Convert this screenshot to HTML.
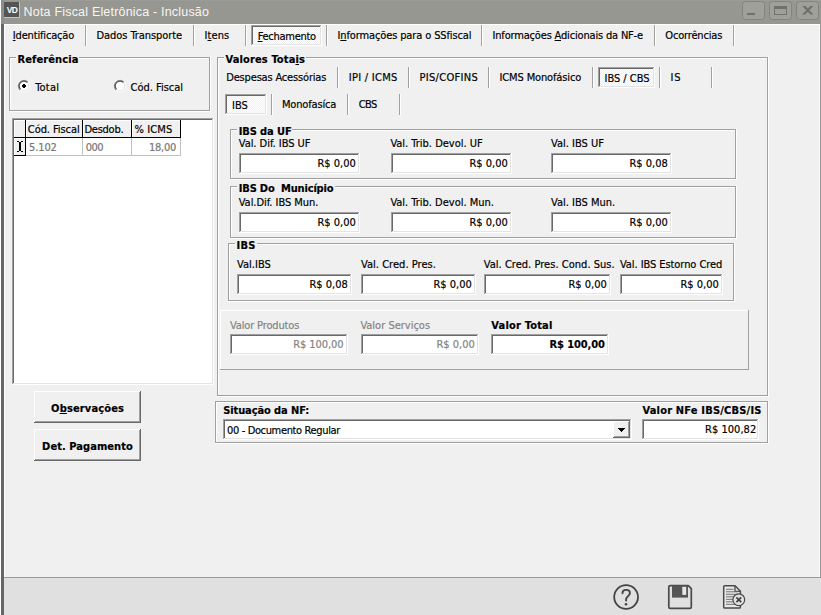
<!DOCTYPE html>
<html lang="pt-BR"><head><meta charset="utf-8"><title>Nota Fiscal Eletrônica - Inclusão</title>
<style>
html,body{margin:0;padding:0}
body{width:821px;height:615px;overflow:hidden;background:#f0f0f0;position:relative;font-family:"DejaVu Sans Condensed","DejaVu Sans","Liberation Sans",sans-serif;font-size:11px;font-stretch:condensed;line-height:14px;color:#000}
#w{position:absolute;left:0;top:0;width:821px;height:615px;overflow:hidden;background:#f0f0f0}
#w i{position:absolute;display:block}
#w span{position:absolute;white-space:pre;height:14px;-webkit-text-stroke:0.18px currentColor}
#w u{text-decoration:underline;text-underline-offset:1px;text-decoration-thickness:1px}
#w svg{position:absolute;overflow:visible}
</style></head><body><div id="w">
<i style="left:0px;top:0px;width:821px;height:24px;background:#969790;"></i>
<i style="left:0px;top:0px;width:821px;height:1px;background:#9b9b98;"></i>
<i style="left:0px;top:0px;width:1px;height:615px;background:#ffffff;"></i>
<i style="left:1px;top:0px;width:3px;height:24px;background:#8e8e8c;"></i>
<i style="left:1px;top:24px;width:3px;height:591px;background:#666666;"></i>
<i style="left:4px;top:24px;width:816px;height:1px;background:#ffffff;"></i>
<i style="left:4px;top:24px;width:1px;height:553px;background:#ffffff;"></i>
<i style="left:819px;top:25px;width:1px;height:552px;background:#fafafa;"></i>
<i style="left:820px;top:24px;width:1px;height:554px;background:#999999;"></i>
<i style="left:4px;top:577px;width:817px;height:1px;background:#999999;"></i>
<i style="left:4px;top:578px;width:817px;height:37px;background:#e0e0e0;"></i>
<i style="left:4px;top:2px;width:15px;height:15px;background:#555555;"></i>
<i style="left:19px;top:2px;width:1px;height:16px;background:#c4c4c0;"></i>
<i style="left:4px;top:17px;width:16px;height:1px;background:#c4c4c0;"></i>
<i style="left:85px;top:25px;width:1px;height:21px;background:#a0a0a0;"></i>
<i style="left:86px;top:25px;width:1px;height:21px;background:#ffffff;"></i>
<i style="left:193px;top:25px;width:1px;height:21px;background:#a0a0a0;"></i>
<i style="left:194px;top:25px;width:1px;height:21px;background:#ffffff;"></i>
<i style="left:245px;top:25px;width:1px;height:21px;background:#a0a0a0;"></i>
<i style="left:246px;top:25px;width:1px;height:21px;background:#ffffff;"></i>
<i style="left:326px;top:25px;width:1px;height:21px;background:#a0a0a0;"></i>
<i style="left:327px;top:25px;width:1px;height:21px;background:#ffffff;"></i>
<i style="left:481px;top:25px;width:1px;height:21px;background:#a0a0a0;"></i>
<i style="left:482px;top:25px;width:1px;height:21px;background:#ffffff;"></i>
<i style="left:654px;top:25px;width:1px;height:21px;background:#a0a0a0;"></i>
<i style="left:655px;top:25px;width:1px;height:21px;background:#ffffff;"></i>
<i style="left:733px;top:25px;width:1px;height:21px;background:#a0a0a0;"></i>
<i style="left:734px;top:25px;width:1px;height:21px;background:#ffffff;"></i>
<i style="left:251px;top:25px;width:71px;height:21px;background:#f8f8f8;background:repeating-conic-gradient(#ffffff 0% 25%,#f0f0f0 0% 50%) 0 0/2px 2px;"></i>
<i style="left:251px;top:25px;width:71px;height:1px;background:#a0a0a0;"></i>
<i style="left:251px;top:25px;width:1px;height:21px;background:#a0a0a0;"></i>
<i style="left:252px;top:26px;width:69px;height:1px;background:#696969;"></i>
<i style="left:252px;top:26px;width:1px;height:19px;background:#696969;"></i>
<i style="left:252px;top:44px;width:69px;height:1px;background:#e3e3e3;"></i>
<i style="left:320px;top:26px;width:1px;height:19px;background:#e3e3e3;"></i>
<i style="left:251px;top:45px;width:71px;height:1px;background:#ffffff;"></i>
<i style="left:321px;top:25px;width:1px;height:21px;background:#ffffff;"></i>
<i style="left:9px;top:57px;width:7px;height:1px;background:#a0a0a0;"></i>
<i style="left:79px;top:57px;width:131px;height:1px;background:#a0a0a0;"></i>
<i style="left:10px;top:58px;width:6px;height:1px;background:#ffffff;"></i>
<i style="left:79px;top:58px;width:130px;height:1px;background:#ffffff;"></i>
<i style="left:9px;top:57px;width:1px;height:54px;background:#a0a0a0;"></i>
<i style="left:10px;top:58px;width:1px;height:52px;background:#ffffff;"></i>
<i style="left:9px;top:110px;width:201px;height:1px;background:#a0a0a0;"></i>
<i style="left:9px;top:111px;width:202px;height:1px;background:#ffffff;"></i>
<i style="left:209px;top:57px;width:1px;height:54px;background:#a0a0a0;"></i>
<i style="left:210px;top:57px;width:1px;height:55px;background:#ffffff;"></i>
<i style="left:12px;top:118px;width:202px;height:267px;background:#ffffff;"></i>
<i style="left:12px;top:118px;width:202px;height:1px;background:#a0a0a0;"></i>
<i style="left:12px;top:118px;width:1px;height:267px;background:#a0a0a0;"></i>
<i style="left:13px;top:119px;width:200px;height:1px;background:#696969;"></i>
<i style="left:13px;top:119px;width:1px;height:265px;background:#696969;"></i>
<i style="left:13px;top:383px;width:200px;height:1px;background:#e3e3e3;"></i>
<i style="left:212px;top:119px;width:1px;height:265px;background:#e3e3e3;"></i>
<i style="left:12px;top:384px;width:202px;height:1px;background:#ffffff;"></i>
<i style="left:213px;top:118px;width:1px;height:267px;background:#ffffff;"></i>
<i style="left:14px;top:120px;width:12px;height:18px;background:#f0f0f0;"></i>
<i style="left:14px;top:120px;width:11px;height:1px;background:#ffffff;"></i>
<i style="left:14px;top:120px;width:1px;height:17px;background:#ffffff;"></i>
<i style="left:25px;top:120px;width:1px;height:18px;background:#000;"></i>
<i style="left:14px;top:137px;width:12px;height:1px;background:#000;"></i>
<i style="left:26px;top:120px;width:57px;height:18px;background:#f0f0f0;"></i>
<i style="left:26px;top:120px;width:56px;height:1px;background:#ffffff;"></i>
<i style="left:26px;top:120px;width:1px;height:17px;background:#ffffff;"></i>
<i style="left:82px;top:120px;width:1px;height:18px;background:#000;"></i>
<i style="left:26px;top:137px;width:57px;height:1px;background:#000;"></i>
<i style="left:83px;top:120px;width:49px;height:18px;background:#f0f0f0;"></i>
<i style="left:83px;top:120px;width:48px;height:1px;background:#ffffff;"></i>
<i style="left:83px;top:120px;width:1px;height:17px;background:#ffffff;"></i>
<i style="left:131px;top:120px;width:1px;height:18px;background:#000;"></i>
<i style="left:83px;top:137px;width:49px;height:1px;background:#000;"></i>
<i style="left:132px;top:120px;width:49px;height:18px;background:#f0f0f0;"></i>
<i style="left:132px;top:120px;width:48px;height:1px;background:#ffffff;"></i>
<i style="left:132px;top:120px;width:1px;height:17px;background:#ffffff;"></i>
<i style="left:180px;top:120px;width:1px;height:18px;background:#000;"></i>
<i style="left:132px;top:137px;width:49px;height:1px;background:#000;"></i>
<i style="left:14px;top:138px;width:12px;height:18px;background:#f0f0f0;"></i>
<i style="left:25px;top:138px;width:1px;height:18px;background:#000;"></i>
<i style="left:14px;top:155px;width:12px;height:1px;background:#000;"></i>
<i style="left:14px;top:138px;width:11px;height:1px;background:#ffffff;"></i>
<i style="left:14px;top:138px;width:1px;height:17px;background:#ffffff;"></i>
<i style="left:82px;top:138px;width:1px;height:18px;background:#c0c0c0;"></i>
<i style="left:131px;top:138px;width:1px;height:18px;background:#c0c0c0;"></i>
<i style="left:180px;top:138px;width:1px;height:18px;background:#c0c0c0;"></i>
<i style="left:26px;top:155px;width:155px;height:1px;background:#c0c0c0;"></i>
<i style="left:34px;top:391px;width:107px;height:32px;background:#f0f0f0;"></i>
<i style="left:34px;top:391px;width:106px;height:1px;background:#ffffff;"></i>
<i style="left:34px;top:391px;width:1px;height:31px;background:#ffffff;"></i>
<i style="left:35px;top:421px;width:105px;height:1px;background:#a0a0a0;"></i>
<i style="left:139px;top:392px;width:1px;height:30px;background:#a0a0a0;"></i>
<i style="left:34px;top:422px;width:107px;height:1px;background:#696969;"></i>
<i style="left:140px;top:391px;width:1px;height:32px;background:#696969;"></i>
<i style="left:34px;top:429px;width:107px;height:32px;background:#f0f0f0;"></i>
<i style="left:34px;top:429px;width:106px;height:1px;background:#ffffff;"></i>
<i style="left:34px;top:429px;width:1px;height:31px;background:#ffffff;"></i>
<i style="left:35px;top:459px;width:105px;height:1px;background:#a0a0a0;"></i>
<i style="left:139px;top:430px;width:1px;height:30px;background:#a0a0a0;"></i>
<i style="left:34px;top:460px;width:107px;height:1px;background:#696969;"></i>
<i style="left:140px;top:429px;width:1px;height:32px;background:#696969;"></i>
<i style="left:217px;top:57px;width:7px;height:1px;background:#a0a0a0;"></i>
<i style="left:306px;top:57px;width:462px;height:1px;background:#a0a0a0;"></i>
<i style="left:218px;top:58px;width:6px;height:1px;background:#ffffff;"></i>
<i style="left:306px;top:58px;width:461px;height:1px;background:#ffffff;"></i>
<i style="left:217px;top:57px;width:1px;height:339px;background:#a0a0a0;"></i>
<i style="left:218px;top:58px;width:1px;height:337px;background:#ffffff;"></i>
<i style="left:217px;top:395px;width:551px;height:1px;background:#a0a0a0;"></i>
<i style="left:217px;top:396px;width:552px;height:1px;background:#ffffff;"></i>
<i style="left:767px;top:57px;width:1px;height:339px;background:#a0a0a0;"></i>
<i style="left:768px;top:57px;width:1px;height:340px;background:#ffffff;"></i>
<i style="left:337px;top:67px;width:1px;height:21px;background:#a0a0a0;"></i>
<i style="left:338px;top:67px;width:1px;height:21px;background:#ffffff;"></i>
<i style="left:408px;top:67px;width:1px;height:21px;background:#a0a0a0;"></i>
<i style="left:409px;top:67px;width:1px;height:21px;background:#ffffff;"></i>
<i style="left:488px;top:67px;width:1px;height:21px;background:#a0a0a0;"></i>
<i style="left:489px;top:67px;width:1px;height:21px;background:#ffffff;"></i>
<i style="left:592px;top:67px;width:1px;height:21px;background:#a0a0a0;"></i>
<i style="left:593px;top:67px;width:1px;height:21px;background:#ffffff;"></i>
<i style="left:659px;top:67px;width:1px;height:21px;background:#a0a0a0;"></i>
<i style="left:660px;top:67px;width:1px;height:21px;background:#ffffff;"></i>
<i style="left:711px;top:67px;width:1px;height:21px;background:#a0a0a0;"></i>
<i style="left:712px;top:67px;width:1px;height:21px;background:#ffffff;"></i>
<i style="left:598px;top:67px;width:57px;height:21px;background:#f8f8f8;background:repeating-conic-gradient(#ffffff 0% 25%,#f0f0f0 0% 50%) 0 0/2px 2px;"></i>
<i style="left:598px;top:67px;width:57px;height:1px;background:#a0a0a0;"></i>
<i style="left:598px;top:67px;width:1px;height:21px;background:#a0a0a0;"></i>
<i style="left:599px;top:68px;width:55px;height:1px;background:#696969;"></i>
<i style="left:599px;top:68px;width:1px;height:19px;background:#696969;"></i>
<i style="left:599px;top:86px;width:55px;height:1px;background:#e3e3e3;"></i>
<i style="left:653px;top:68px;width:1px;height:19px;background:#e3e3e3;"></i>
<i style="left:598px;top:87px;width:57px;height:1px;background:#ffffff;"></i>
<i style="left:654px;top:67px;width:1px;height:21px;background:#ffffff;"></i>
<i style="left:271px;top:94px;width:1px;height:21px;background:#a0a0a0;"></i>
<i style="left:272px;top:94px;width:1px;height:21px;background:#ffffff;"></i>
<i style="left:347px;top:94px;width:1px;height:21px;background:#a0a0a0;"></i>
<i style="left:348px;top:94px;width:1px;height:21px;background:#ffffff;"></i>
<i style="left:399px;top:94px;width:1px;height:21px;background:#a0a0a0;"></i>
<i style="left:400px;top:94px;width:1px;height:21px;background:#ffffff;"></i>
<i style="left:225px;top:94px;width:42px;height:21px;background:#f8f8f8;background:repeating-conic-gradient(#ffffff 0% 25%,#f0f0f0 0% 50%) 0 0/2px 2px;"></i>
<i style="left:225px;top:94px;width:42px;height:1px;background:#a0a0a0;"></i>
<i style="left:225px;top:94px;width:1px;height:21px;background:#a0a0a0;"></i>
<i style="left:226px;top:95px;width:40px;height:1px;background:#696969;"></i>
<i style="left:226px;top:95px;width:1px;height:19px;background:#696969;"></i>
<i style="left:226px;top:113px;width:40px;height:1px;background:#e3e3e3;"></i>
<i style="left:265px;top:95px;width:1px;height:19px;background:#e3e3e3;"></i>
<i style="left:225px;top:114px;width:42px;height:1px;background:#ffffff;"></i>
<i style="left:266px;top:94px;width:1px;height:21px;background:#ffffff;"></i>
<i style="left:230px;top:129px;width:7px;height:1px;background:#a0a0a0;"></i>
<i style="left:292px;top:129px;width:444px;height:1px;background:#a0a0a0;"></i>
<i style="left:231px;top:130px;width:6px;height:1px;background:#ffffff;"></i>
<i style="left:292px;top:130px;width:443px;height:1px;background:#ffffff;"></i>
<i style="left:230px;top:129px;width:1px;height:50px;background:#a0a0a0;"></i>
<i style="left:231px;top:130px;width:1px;height:48px;background:#ffffff;"></i>
<i style="left:230px;top:178px;width:506px;height:1px;background:#a0a0a0;"></i>
<i style="left:230px;top:179px;width:507px;height:1px;background:#ffffff;"></i>
<i style="left:735px;top:129px;width:1px;height:50px;background:#a0a0a0;"></i>
<i style="left:736px;top:129px;width:1px;height:51px;background:#ffffff;"></i>
<i style="left:239px;top:153px;width:121px;height:21px;background:#ffffff;"></i>
<i style="left:239px;top:153px;width:121px;height:1px;background:#a0a0a0;"></i>
<i style="left:239px;top:153px;width:1px;height:21px;background:#a0a0a0;"></i>
<i style="left:240px;top:154px;width:119px;height:1px;background:#696969;"></i>
<i style="left:240px;top:154px;width:1px;height:19px;background:#696969;"></i>
<i style="left:240px;top:172px;width:119px;height:1px;background:#e3e3e3;"></i>
<i style="left:358px;top:154px;width:1px;height:19px;background:#e3e3e3;"></i>
<i style="left:239px;top:173px;width:121px;height:1px;background:#ffffff;"></i>
<i style="left:359px;top:153px;width:1px;height:21px;background:#ffffff;"></i>
<i style="left:391px;top:153px;width:121px;height:21px;background:#ffffff;"></i>
<i style="left:391px;top:153px;width:121px;height:1px;background:#a0a0a0;"></i>
<i style="left:391px;top:153px;width:1px;height:21px;background:#a0a0a0;"></i>
<i style="left:392px;top:154px;width:119px;height:1px;background:#696969;"></i>
<i style="left:392px;top:154px;width:1px;height:19px;background:#696969;"></i>
<i style="left:392px;top:172px;width:119px;height:1px;background:#e3e3e3;"></i>
<i style="left:510px;top:154px;width:1px;height:19px;background:#e3e3e3;"></i>
<i style="left:391px;top:173px;width:121px;height:1px;background:#ffffff;"></i>
<i style="left:511px;top:153px;width:1px;height:21px;background:#ffffff;"></i>
<i style="left:551px;top:153px;width:121px;height:21px;background:#ffffff;"></i>
<i style="left:551px;top:153px;width:121px;height:1px;background:#a0a0a0;"></i>
<i style="left:551px;top:153px;width:1px;height:21px;background:#a0a0a0;"></i>
<i style="left:552px;top:154px;width:119px;height:1px;background:#696969;"></i>
<i style="left:552px;top:154px;width:1px;height:19px;background:#696969;"></i>
<i style="left:552px;top:172px;width:119px;height:1px;background:#e3e3e3;"></i>
<i style="left:670px;top:154px;width:1px;height:19px;background:#e3e3e3;"></i>
<i style="left:551px;top:173px;width:121px;height:1px;background:#ffffff;"></i>
<i style="left:671px;top:153px;width:1px;height:21px;background:#ffffff;"></i>
<i style="left:230px;top:186px;width:7px;height:1px;background:#a0a0a0;"></i>
<i style="left:335px;top:186px;width:401px;height:1px;background:#a0a0a0;"></i>
<i style="left:231px;top:187px;width:6px;height:1px;background:#ffffff;"></i>
<i style="left:335px;top:187px;width:400px;height:1px;background:#ffffff;"></i>
<i style="left:230px;top:186px;width:1px;height:52px;background:#a0a0a0;"></i>
<i style="left:231px;top:187px;width:1px;height:50px;background:#ffffff;"></i>
<i style="left:230px;top:237px;width:506px;height:1px;background:#a0a0a0;"></i>
<i style="left:230px;top:238px;width:507px;height:1px;background:#ffffff;"></i>
<i style="left:735px;top:186px;width:1px;height:52px;background:#a0a0a0;"></i>
<i style="left:736px;top:186px;width:1px;height:53px;background:#ffffff;"></i>
<i style="left:239px;top:212px;width:121px;height:21px;background:#ffffff;"></i>
<i style="left:239px;top:212px;width:121px;height:1px;background:#a0a0a0;"></i>
<i style="left:239px;top:212px;width:1px;height:21px;background:#a0a0a0;"></i>
<i style="left:240px;top:213px;width:119px;height:1px;background:#696969;"></i>
<i style="left:240px;top:213px;width:1px;height:19px;background:#696969;"></i>
<i style="left:240px;top:231px;width:119px;height:1px;background:#e3e3e3;"></i>
<i style="left:358px;top:213px;width:1px;height:19px;background:#e3e3e3;"></i>
<i style="left:239px;top:232px;width:121px;height:1px;background:#ffffff;"></i>
<i style="left:359px;top:212px;width:1px;height:21px;background:#ffffff;"></i>
<i style="left:391px;top:212px;width:121px;height:21px;background:#ffffff;"></i>
<i style="left:391px;top:212px;width:121px;height:1px;background:#a0a0a0;"></i>
<i style="left:391px;top:212px;width:1px;height:21px;background:#a0a0a0;"></i>
<i style="left:392px;top:213px;width:119px;height:1px;background:#696969;"></i>
<i style="left:392px;top:213px;width:1px;height:19px;background:#696969;"></i>
<i style="left:392px;top:231px;width:119px;height:1px;background:#e3e3e3;"></i>
<i style="left:510px;top:213px;width:1px;height:19px;background:#e3e3e3;"></i>
<i style="left:391px;top:232px;width:121px;height:1px;background:#ffffff;"></i>
<i style="left:511px;top:212px;width:1px;height:21px;background:#ffffff;"></i>
<i style="left:551px;top:212px;width:121px;height:21px;background:#ffffff;"></i>
<i style="left:551px;top:212px;width:121px;height:1px;background:#a0a0a0;"></i>
<i style="left:551px;top:212px;width:1px;height:21px;background:#a0a0a0;"></i>
<i style="left:552px;top:213px;width:119px;height:1px;background:#696969;"></i>
<i style="left:552px;top:213px;width:1px;height:19px;background:#696969;"></i>
<i style="left:552px;top:231px;width:119px;height:1px;background:#e3e3e3;"></i>
<i style="left:670px;top:213px;width:1px;height:19px;background:#e3e3e3;"></i>
<i style="left:551px;top:232px;width:121px;height:1px;background:#ffffff;"></i>
<i style="left:671px;top:212px;width:1px;height:21px;background:#ffffff;"></i>
<i style="left:228px;top:243px;width:7px;height:1px;background:#a0a0a0;"></i>
<i style="left:257px;top:243px;width:477px;height:1px;background:#a0a0a0;"></i>
<i style="left:229px;top:244px;width:6px;height:1px;background:#ffffff;"></i>
<i style="left:257px;top:244px;width:476px;height:1px;background:#ffffff;"></i>
<i style="left:228px;top:243px;width:1px;height:58px;background:#a0a0a0;"></i>
<i style="left:229px;top:244px;width:1px;height:56px;background:#ffffff;"></i>
<i style="left:228px;top:300px;width:506px;height:1px;background:#a0a0a0;"></i>
<i style="left:228px;top:301px;width:507px;height:1px;background:#ffffff;"></i>
<i style="left:733px;top:243px;width:1px;height:58px;background:#a0a0a0;"></i>
<i style="left:734px;top:243px;width:1px;height:59px;background:#ffffff;"></i>
<i style="left:237px;top:274px;width:115px;height:21px;background:#ffffff;"></i>
<i style="left:237px;top:274px;width:115px;height:1px;background:#a0a0a0;"></i>
<i style="left:237px;top:274px;width:1px;height:21px;background:#a0a0a0;"></i>
<i style="left:238px;top:275px;width:113px;height:1px;background:#696969;"></i>
<i style="left:238px;top:275px;width:1px;height:19px;background:#696969;"></i>
<i style="left:238px;top:293px;width:113px;height:1px;background:#e3e3e3;"></i>
<i style="left:350px;top:275px;width:1px;height:19px;background:#e3e3e3;"></i>
<i style="left:237px;top:294px;width:115px;height:1px;background:#ffffff;"></i>
<i style="left:351px;top:274px;width:1px;height:21px;background:#ffffff;"></i>
<i style="left:361px;top:274px;width:115px;height:21px;background:#ffffff;"></i>
<i style="left:361px;top:274px;width:115px;height:1px;background:#a0a0a0;"></i>
<i style="left:361px;top:274px;width:1px;height:21px;background:#a0a0a0;"></i>
<i style="left:362px;top:275px;width:113px;height:1px;background:#696969;"></i>
<i style="left:362px;top:275px;width:1px;height:19px;background:#696969;"></i>
<i style="left:362px;top:293px;width:113px;height:1px;background:#e3e3e3;"></i>
<i style="left:474px;top:275px;width:1px;height:19px;background:#e3e3e3;"></i>
<i style="left:361px;top:294px;width:115px;height:1px;background:#ffffff;"></i>
<i style="left:475px;top:274px;width:1px;height:21px;background:#ffffff;"></i>
<i style="left:484px;top:274px;width:127px;height:21px;background:#ffffff;"></i>
<i style="left:484px;top:274px;width:127px;height:1px;background:#a0a0a0;"></i>
<i style="left:484px;top:274px;width:1px;height:21px;background:#a0a0a0;"></i>
<i style="left:485px;top:275px;width:125px;height:1px;background:#696969;"></i>
<i style="left:485px;top:275px;width:1px;height:19px;background:#696969;"></i>
<i style="left:485px;top:293px;width:125px;height:1px;background:#e3e3e3;"></i>
<i style="left:609px;top:275px;width:1px;height:19px;background:#e3e3e3;"></i>
<i style="left:484px;top:294px;width:127px;height:1px;background:#ffffff;"></i>
<i style="left:610px;top:274px;width:1px;height:21px;background:#ffffff;"></i>
<i style="left:620px;top:274px;width:103px;height:21px;background:#ffffff;"></i>
<i style="left:620px;top:274px;width:103px;height:1px;background:#a0a0a0;"></i>
<i style="left:620px;top:274px;width:1px;height:21px;background:#a0a0a0;"></i>
<i style="left:621px;top:275px;width:101px;height:1px;background:#696969;"></i>
<i style="left:621px;top:275px;width:1px;height:19px;background:#696969;"></i>
<i style="left:621px;top:293px;width:101px;height:1px;background:#e3e3e3;"></i>
<i style="left:721px;top:275px;width:1px;height:19px;background:#e3e3e3;"></i>
<i style="left:620px;top:294px;width:103px;height:1px;background:#ffffff;"></i>
<i style="left:722px;top:274px;width:1px;height:21px;background:#ffffff;"></i>
<i style="left:220px;top:310px;width:529px;height:1px;background:#ffffff;"></i>
<i style="left:220px;top:310px;width:1px;height:60px;background:#ffffff;"></i>
<i style="left:220px;top:369px;width:529px;height:1px;background:#a0a0a0;"></i>
<i style="left:748px;top:310px;width:1px;height:60px;background:#a0a0a0;"></i>
<i style="left:230px;top:334px;width:118px;height:21px;background:#ffffff;"></i>
<i style="left:230px;top:334px;width:118px;height:1px;background:#a0a0a0;"></i>
<i style="left:230px;top:334px;width:1px;height:21px;background:#a0a0a0;"></i>
<i style="left:231px;top:335px;width:116px;height:1px;background:#696969;"></i>
<i style="left:231px;top:335px;width:1px;height:19px;background:#696969;"></i>
<i style="left:231px;top:353px;width:116px;height:1px;background:#e3e3e3;"></i>
<i style="left:346px;top:335px;width:1px;height:19px;background:#e3e3e3;"></i>
<i style="left:230px;top:354px;width:118px;height:1px;background:#ffffff;"></i>
<i style="left:347px;top:334px;width:1px;height:21px;background:#ffffff;"></i>
<i style="left:361px;top:334px;width:118px;height:21px;background:#ffffff;"></i>
<i style="left:361px;top:334px;width:118px;height:1px;background:#a0a0a0;"></i>
<i style="left:361px;top:334px;width:1px;height:21px;background:#a0a0a0;"></i>
<i style="left:362px;top:335px;width:116px;height:1px;background:#696969;"></i>
<i style="left:362px;top:335px;width:1px;height:19px;background:#696969;"></i>
<i style="left:362px;top:353px;width:116px;height:1px;background:#e3e3e3;"></i>
<i style="left:477px;top:335px;width:1px;height:19px;background:#e3e3e3;"></i>
<i style="left:361px;top:354px;width:118px;height:1px;background:#ffffff;"></i>
<i style="left:478px;top:334px;width:1px;height:21px;background:#ffffff;"></i>
<i style="left:491px;top:334px;width:118px;height:21px;background:#ffffff;"></i>
<i style="left:491px;top:334px;width:118px;height:1px;background:#a0a0a0;"></i>
<i style="left:491px;top:334px;width:1px;height:21px;background:#a0a0a0;"></i>
<i style="left:492px;top:335px;width:116px;height:1px;background:#696969;"></i>
<i style="left:492px;top:335px;width:1px;height:19px;background:#696969;"></i>
<i style="left:492px;top:353px;width:116px;height:1px;background:#e3e3e3;"></i>
<i style="left:607px;top:335px;width:1px;height:19px;background:#e3e3e3;"></i>
<i style="left:491px;top:354px;width:118px;height:1px;background:#ffffff;"></i>
<i style="left:608px;top:334px;width:1px;height:21px;background:#ffffff;"></i>
<i style="left:215px;top:401px;width:553px;height:1px;background:#a0a0a0;"></i>
<i style="left:216px;top:402px;width:551px;height:1px;background:#ffffff;"></i>
<i style="left:215px;top:401px;width:1px;height:42px;background:#a0a0a0;"></i>
<i style="left:216px;top:402px;width:1px;height:40px;background:#ffffff;"></i>
<i style="left:215px;top:442px;width:553px;height:1px;background:#a0a0a0;"></i>
<i style="left:215px;top:443px;width:554px;height:1px;background:#ffffff;"></i>
<i style="left:767px;top:401px;width:1px;height:42px;background:#a0a0a0;"></i>
<i style="left:768px;top:401px;width:1px;height:43px;background:#ffffff;"></i>
<i style="left:223px;top:419px;width:409px;height:21px;background:#ffffff;"></i>
<i style="left:223px;top:419px;width:409px;height:1px;background:#a0a0a0;"></i>
<i style="left:223px;top:419px;width:1px;height:21px;background:#a0a0a0;"></i>
<i style="left:224px;top:420px;width:407px;height:1px;background:#696969;"></i>
<i style="left:224px;top:420px;width:1px;height:19px;background:#696969;"></i>
<i style="left:224px;top:438px;width:407px;height:1px;background:#e3e3e3;"></i>
<i style="left:630px;top:420px;width:1px;height:19px;background:#e3e3e3;"></i>
<i style="left:223px;top:439px;width:409px;height:1px;background:#ffffff;"></i>
<i style="left:631px;top:419px;width:1px;height:21px;background:#ffffff;"></i>
<i style="left:613px;top:421px;width:17px;height:17px;background:#f0f0f0;"></i>
<i style="left:613px;top:421px;width:16px;height:1px;background:#ffffff;"></i>
<i style="left:613px;top:421px;width:1px;height:16px;background:#ffffff;"></i>
<i style="left:614px;top:436px;width:15px;height:1px;background:#a0a0a0;"></i>
<i style="left:628px;top:422px;width:1px;height:15px;background:#a0a0a0;"></i>
<i style="left:613px;top:437px;width:17px;height:1px;background:#696969;"></i>
<i style="left:629px;top:421px;width:1px;height:17px;background:#696969;"></i>
<svg style="left:618px;top:428px" width="7" height="4" viewBox="0 0 7 4" shape-rendering="crispEdges"><path d="M0 0h7v1h-1v1h-1v1h-1v1h-1v-1h-1v-1h-1v-1h-1z" fill="#000"/></svg>
<i style="left:642px;top:419px;width:117px;height:21px;background:#ffffff;"></i>
<i style="left:642px;top:419px;width:117px;height:1px;background:#a0a0a0;"></i>
<i style="left:642px;top:419px;width:1px;height:21px;background:#a0a0a0;"></i>
<i style="left:643px;top:420px;width:115px;height:1px;background:#696969;"></i>
<i style="left:643px;top:420px;width:1px;height:19px;background:#696969;"></i>
<i style="left:643px;top:438px;width:115px;height:1px;background:#e3e3e3;"></i>
<i style="left:757px;top:420px;width:1px;height:19px;background:#e3e3e3;"></i>
<i style="left:642px;top:439px;width:117px;height:1px;background:#ffffff;"></i>
<i style="left:758px;top:419px;width:1px;height:21px;background:#ffffff;"></i>
<span style="left:23.60px;top:5.00px;letter-spacing:0.191px;color:#f6f6f4;font-size:12.5px;font-family:'Liberation Sans',sans-serif;-webkit-text-stroke:0;">Nota Fiscal Eletrônica - Inclusão</span>
<span style="left:6.80px;top:2.50px;letter-spacing:-0.600px;font-weight:bold;color:#fff;font-size:8.5px;font-family:'Liberation Sans',sans-serif;-webkit-text-stroke:0;">VD</span>
<span style="left:12.80px;top:29.00px;letter-spacing:-0.166px;"><u>I</u>dentificação</span>
<span style="left:96.50px;top:29.00px;letter-spacing:-0.073px;">Dados Transporte</span>
<span style="left:204.50px;top:29.00px;letter-spacing:0.085px;">I<u>t</u>ens</span>
<span style="left:257.70px;top:30.00px;letter-spacing:-0.272px;"><u>F</u>echamento</span>
<span style="left:337.50px;top:29.00px;letter-spacing:-0.124px;">I<u>n</u>formações para o SSfiscal</span>
<span style="left:492.50px;top:29.00px;letter-spacing:-0.175px;">Informações <u>A</u>dicionais da NF-e</span>
<span style="left:665.25px;top:29.00px;letter-spacing:-0.160px;">Ocorrências</span>
<span style="left:17.40px;top:53.00px;letter-spacing:0.117px;font-weight:bold;">Referência</span>
<span style="left:35.20px;top:81.00px;letter-spacing:0.208px;">Total</span>
<span style="left:130.60px;top:81.00px;letter-spacing:-0.014px;">Cód. Fiscal</span>
<span style="left:27.80px;top:123.00px;letter-spacing:-0.064px;">Cód. Fiscal</span>
<span style="left:84.50px;top:123.00px;letter-spacing:-0.265px;">Desdob.</span>
<span style="left:134.40px;top:123.00px;letter-spacing:0.117px;">% ICMS</span>
<span style="left:29.00px;top:141.00px;letter-spacing:-0.107px;color:#767676;">5.102</span>
<span style="left:85.80px;top:141.00px;letter-spacing:-0.545px;color:#767676;">000</span>
<span style="left:149.00px;top:141.00px;letter-spacing:-0.257px;color:#767676;">18,00</span>
<span style="left:51.10px;top:402.00px;letter-spacing:0.151px;font-weight:bold;">O<u>b</u>servações</span>
<span style="left:42.10px;top:440.00px;letter-spacing:0.064px;font-weight:bold;">Det. Pa<u>g</u>amento</span>
<span style="left:225.50px;top:53.00px;letter-spacing:0.135px;font-weight:bold;">Valores Tota<u>i</u>s</span>
<span style="left:226.25px;top:71.00px;letter-spacing:-0.173px;">Despesas Acessórias</span>
<span style="left:348.75px;top:71.00px;letter-spacing:0.273px;">IPI / ICMS</span>
<span style="left:419.50px;top:71.00px;letter-spacing:0.309px;">PIS/COFINS</span>
<span style="left:499.50px;top:71.00px;letter-spacing:-0.133px;">ICMS Monofásico</span>
<span style="left:604.60px;top:72.00px;letter-spacing:-0.041px;">IBS / CBS</span>
<span style="left:670.50px;top:71.00px;letter-spacing:0.800px;">IS</span>
<span style="left:232.00px;top:99.00px;letter-spacing:-0.006px;">IBS</span>
<span style="left:282.00px;top:98.00px;letter-spacing:-0.174px;">Monofasíca</span>
<span style="left:358.75px;top:98.00px;letter-spacing:-0.600px;">CBS</span>
<span style="left:238.70px;top:125.00px;letter-spacing:-0.104px;font-weight:bold;">IBS da UF</span>
<span style="left:238.75px;top:137.00px;letter-spacing:-0.035px;">Val. Dif. IBS UF</span>
<span style="left:390.40px;top:137.00px;letter-spacing:-0.006px;">Val. Trib. Devol. UF</span>
<span style="left:551.00px;top:137.00px;">Val. IBS UF</span>
<span style="left:317.50px;top:157.00px;letter-spacing:-0.007px;">R$ 0,00</span>
<span style="left:469.50px;top:157.00px;letter-spacing:-0.007px;">R$ 0,00</span>
<span style="left:629.50px;top:157.00px;letter-spacing:-0.007px;">R$ 0,08</span>
<span style="left:238.75px;top:182.00px;letter-spacing:-0.172px;font-weight:bold;">IBS Do  Município</span>
<span style="left:238.75px;top:196.00px;letter-spacing:-0.046px;">Val.Dif. IBS Mun.</span>
<span style="left:390.40px;top:196.00px;letter-spacing:-0.008px;">Val. Trib. Devol. Mun.</span>
<span style="left:551.00px;top:196.00px;">Val. IBS Mun.</span>
<span style="left:317.50px;top:216.00px;letter-spacing:-0.007px;">R$ 0,00</span>
<span style="left:469.50px;top:216.00px;letter-spacing:-0.007px;">R$ 0,00</span>
<span style="left:629.50px;top:216.00px;letter-spacing:-0.007px;">R$ 0,00</span>
<span style="left:236.60px;top:239.00px;letter-spacing:0.190px;font-weight:bold;">IBS</span>
<span style="left:237.00px;top:258.00px;letter-spacing:0.020px;">Val.IBS</span>
<span style="left:361.00px;top:258.00px;letter-spacing:0.033px;">Val. Cred. Pres.</span>
<span style="left:483.75px;top:258.00px;letter-spacing:0.027px;">Val. Cred. Pres. Cond. Sus.</span>
<span style="left:620.00px;top:258.00px;letter-spacing:-0.073px;">Val. IBS Estorno Cred</span>
<span style="left:309.50px;top:278.00px;letter-spacing:-0.007px;">R$ 0,08</span>
<span style="left:433.50px;top:278.00px;letter-spacing:-0.007px;">R$ 0,00</span>
<span style="left:568.50px;top:278.00px;letter-spacing:-0.007px;">R$ 0,00</span>
<span style="left:680.50px;top:278.00px;letter-spacing:-0.007px;">R$ 0,00</span>
<span style="left:230.00px;top:319.00px;letter-spacing:-0.145px;color:#838383;">Valor Produtos</span>
<span style="left:360.40px;top:319.00px;color:#838383;">Valor Serviços</span>
<span style="left:491.25px;top:319.00px;letter-spacing:0.200px;font-weight:bold;">Valor Total</span>
<span style="left:293.25px;top:338.00px;letter-spacing:-0.079px;color:#838383;">R$ 100,00</span>
<span style="left:436.50px;top:338.00px;letter-spacing:-0.007px;color:#838383;">R$ 0,00</span>
<span style="left:549.50px;top:338.00px;letter-spacing:-0.094px;font-weight:bold;">R$ 100,00</span>
<span style="left:223.20px;top:404.00px;letter-spacing:-0.097px;font-weight:bold;">Situação da NF:</span>
<span style="left:227.00px;top:424.00px;letter-spacing:-0.357px;">00 - Documento Regular</span>
<span style="left:642.50px;top:404.00px;letter-spacing:0.187px;font-weight:bold;">Valor NFe IBS/CBS/IS</span>
<span style="left:705.10px;top:423.00px;letter-spacing:0.021px;">R$ 100,82</span>
<!-- window caption buttons -->
<svg style="left:741px;top:0px" width="80" height="22" viewBox="741 0 80 22">
  <g fill="#9fa09a" stroke="#83847e" stroke-width="1">
    <rect x="742.5" y="1.5" width="22" height="18" rx="3"/>
    <rect x="769.5" y="1.5" width="22" height="18" rx="3"/>
    <rect x="796.5" y="1.5" width="22" height="18" rx="3"/>
  </g>
  <rect x="747" y="13" width="8" height="2" fill="#70716b"/>
  <path d="M774 6h13v9h-13zM775 9v5h11v-5z" fill="#70716b" fill-rule="evenodd"/>
  <path d="M802.2 6h3.2l2.4 2.6 2.4-2.6h3.2l-4 4.2 4.2 4.3h-3.3l-2.5-2.8-2.5 2.8h-3.3l4.2-4.3z" fill="#70716b"/>
</svg>
<!-- radio buttons -->
<svg style="left:18px;top:80px" width="12" height="12" viewBox="0 0 12 12">
  <circle cx="6" cy="6" r="5" fill="#fff"/>
  <path d="M1.9 10.1A5.8 5.8 0 0 1 10.1 1.9" fill="none" stroke="#909090" stroke-width="1"/>
  <path d="M2.6 9.4A4.8 4.8 0 0 1 9.4 2.6" fill="none" stroke="#505050" stroke-width="1.2"/>
  <path d="M10.1 1.9A5.8 5.8 0 0 1 1.9 10.1" fill="none" stroke="#fff" stroke-width="1"/>
  <path d="M9.4 2.6A4.8 4.8 0 0 1 2.6 9.4" fill="none" stroke="#e3e3e3" stroke-width="1"/>
  <path d="M5 4h2v1h1v2h-1v1h-2v-1h-1v-2h1z" fill="#000"/>
</svg>
<svg style="left:114px;top:80px" width="12" height="12" viewBox="0 0 12 12">
  <circle cx="6" cy="6" r="5" fill="#fff"/>
  <path d="M1.9 10.1A5.8 5.8 0 0 1 10.1 1.9" fill="none" stroke="#909090" stroke-width="1"/>
  <path d="M2.6 9.4A4.8 4.8 0 0 1 9.4 2.6" fill="none" stroke="#505050" stroke-width="1.2"/>
  <path d="M10.1 1.9A5.8 5.8 0 0 1 1.9 10.1" fill="none" stroke="#fff" stroke-width="1"/>
  <path d="M9.4 2.6A4.8 4.8 0 0 1 2.6 9.4" fill="none" stroke="#e3e3e3" stroke-width="1"/>
</svg>
<!-- grid row indicator (I-beam) -->
<svg style="left:17px;top:141px" width="6" height="11" viewBox="0 0 6 11" shape-rendering="crispEdges">
  <path d="M0 0h2v1h2v-1h2v1h-2v9h2v1h-2v-1h-2v1h-2v-1h2v-9h-2z" fill="#000"/>
</svg>
<!-- bottom toolbar icons -->
<svg style="left:610px;top:580px" width="34" height="34" viewBox="610 580 34 34">
  <circle cx="626.1" cy="597" r="11.9" fill="none" stroke="#444" stroke-width="1.8"/>
  <path d="M622.5 593.3c0-2.100 1.600-3.400 3.700-3.400s3.700 1.300 3.700 3.200c0 1.600-1 2.400-2.100 3.300-1.100.9-1.700 1.700-1.700 2.900v1.300" fill="none" stroke="#444" stroke-width="1.9" stroke-linecap="round"/>
  <circle cx="626" cy="604.200" r="1.300" fill="#444"/>
</svg>
<svg style="left:664px;top:580px" width="34" height="34" viewBox="664 580 34 34">
  <path d="M670.300 585.600h18l3 3v18.300a1.500 1.500 0 0 1-1.500 1.500h-19.500a1.500 1.500 0 0 1-1.500-1.500v-19.800a1.500 1.500 0 0 1 1.500-1.500z" fill="none" stroke="#4a4a4a" stroke-width="1.7" stroke-linejoin="round"/>
  <path d="M672 585.600h16v12h-16z" fill="#555"/>
  <rect x="682.3" y="586.800" width="3.900" height="8.100" fill="#e6e6e6"/>
</svg>
<svg style="left:716px;top:580px" width="34" height="34" viewBox="716 580 34 34">
  <path d="M724.800 585.700h10.200l5.400 5.600v15.700a1.100 1.100 0 0 1-1.100 1.100h-14.500a1.100 1.100 0 0 1-1.100-1.100v-20.200a1.100 1.100 0 0 1 1.100-1.100z" fill="#e8e8e8" stroke="#4a4a4a" stroke-width="1.5" stroke-linejoin="round"/>
  <path d="M735 585.700v5.600h5.400" fill="none" stroke="#4a4a4a" stroke-width="1.3"/>
  <g stroke="#6e6e6e" stroke-width="1">
    <path d="M726 589.300h7.500M726 591.800h12M726 594.300h12M726 596.800h12M726 599.300h12M726 601.800h12M726 604.300h12"/>
  </g>
  <circle cx="738.800" cy="599.700" r="5.900" fill="#e2e2e2" stroke="#4a4a4a" stroke-width="1.200"/>
  <path d="M736.400 597.300l4.800 4.800M741.200 597.300l-4.800 4.800" stroke="#444" stroke-width="1.800" fill="none"/>
</svg>

</div></body></html>
